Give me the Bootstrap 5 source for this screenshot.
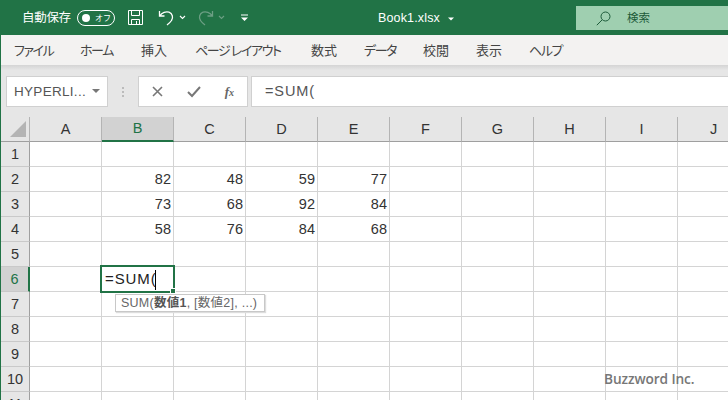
<!DOCTYPE html>
<html lang="ja">
<head>
<meta charset="utf-8">
<title>Book1.xlsx</title>
<link href="https://cdn.jsdelivr.net/npm/bootstrap@5.3.0/dist/css/bootstrap.min.css" rel="stylesheet">
<style>
html,body{width:728px;height:400px;overflow:hidden;background:#e6e6e6;}
body{font-family:"Liberation Sans","Noto Sans CJK JP",sans-serif;color:#333;}
.app{height:400px;overflow:hidden;border-left:1px solid #217346;position:relative;}
.titlebar{height:35px;background:#217346;color:#fff;margin-left:-1px;font-family:"Noto Sans CJK JP",sans-serif;}
.qat{width:576px;}
.autosave{font-size:12.5px;margin-left:22px;width:55px;white-space:nowrap;letter-spacing:-.3px;}
.toggle{width:38px;height:16px;border:1px solid #fff;border-radius:8px;padding-left:4px;font-size:8px;gap:5px;}
.toggle i{width:8px;height:8px;border-radius:50%;background:#fff;display:block;}
.save-ic{margin-left:12px;}
.undo-ic{margin-left:14px;}
.undo-ch{margin-left:3px;}
.redo-ic{margin-left:10px;}
.redo-ch{margin-left:4px;}
.qat-more{margin-left:15px;}
.fname{font-family:"Liberation Sans",sans-serif;font-size:12.5px;position:absolute;left:377px;top:9px;letter-spacing:.15px;}
.searchbox{width:152px;height:24px;background:#9fcfb0;align-self:flex-start;margin-top:6px;color:#1d5b3a;font-size:11.5px;padding-left:20px;gap:16px;}
.ribbon{height:30px;background:#f3f2f1;font-family:"Noto Sans CJK JP",sans-serif;font-size:13px;color:#444;font-feature-settings:"palt";}
.ribbon span{position:absolute;top:41px;line-height:17px;white-space:nowrap;}
.ribbon .kana{letter-spacing:-1.400px;}
.ribbonshadow{height:5px;background:linear-gradient(#d4d4d4,#e6e6e6);}
.fbar{height:37px;padding:6px 0 0 5px;}
.namebox{width:102px;height:31px;background:#fff;border:1px solid #d0d0d0;font-size:13.5px;color:#555;padding:2px 7px 0;letter-spacing:.3px;}
.caret-d{width:0;height:0;border-left:4px solid transparent;border-right:4px solid transparent;border-top:4px solid #777;margin-top:-4px;}
.grip{width:30px;gap:2px;}
.grip i{width:2px;height:2px;background:#bbb;display:block;}
.fxbtns{width:110px;height:31px;background:#fff;border:1px solid #d0d0d0;padding:0 13px 0 13px;}
.fxtext{height:31px;background:#fff;border:1px solid #d0d0d0;margin-left:3px;flex:1;margin-right:-1px;font-size:14.5px;color:#555;padding-left:13px;letter-spacing:.9px;}
.fx{font-family:"Liberation Serif",serif;font-style:italic;font-weight:bold;font-size:13px;color:#666;}
.fx em{font-size:10px;}
.headgap{height:10px;background:#e6e6e6;}
.grid{border-collapse:separate;border-spacing:0;table-layout:fixed;width:749px;margin:0;background:#fff;}
.grid th,.grid td{padding:0;box-sizing:border-box;}
.grid col.rh{width:29px;}
.grid col.cw{width:72px;}
.grid thead th{height:25px;background:#e6e6e6;font-weight:400;font-size:14.5px;text-align:center;color:#333;border-right:1px solid #b4b4b4;border-bottom:1px solid #9f9f9f;line-height:1;}
.grid thead th.on{background:#d2d2d2;color:#217346;border-bottom:2px solid #217346;}
.grid tbody th{height:25px;background:#e6e6e6;font-weight:400;font-size:14.5px;text-align:center;color:#333;border-right:1px solid #9f9f9f;border-bottom:1px solid #c9c9c9;line-height:1;}
.grid tbody th.on{background:#d2d2d2;color:#217346;border-right:2px solid #217346;}
.grid td{height:25px;border-right:1px solid #d4d4d4;border-bottom:1px solid #d4d4d4;background:#fff;text-align:right;font-size:14.5px;line-height:1;color:#333;padding-right:2px;}
.corner{position:relative;}
.corner svg{position:absolute;left:8px;top:3px;}
.selcell{position:absolute;left:99px;top:265px;width:75px;height:28px;border:2px solid #217346;font-size:15px;color:#222;padding-left:3px;line-height:23px;letter-spacing:.9px;white-space:nowrap;}
.selcell i{position:absolute;left:53px;top:3px;width:1px;height:20px;background:#000;}
.selcell u{position:absolute;right:-3px;bottom:-3px;width:6px;height:6px;background:#217346;border:1px solid #fff;}
.tip{position:absolute;left:114px;top:294px;width:150px;height:18px;background:#fff;border:1px solid #c8c8c8;box-shadow:1px 1px 1px #ddd;font-size:12.5px;color:#666;line-height:16px;padding-left:5px;white-space:nowrap;letter-spacing:.25px;}
.tip b{color:#555;}
.wm{position:absolute;left:603px;top:369px;font-size:13.7px;color:#777;font-family:"Open Sans",sans-serif;font-weight:600;letter-spacing:-.1px;}
</style>
</head>
<body>
<div class="app">
  <div class="titlebar d-flex align-items-center">
    <div class="qat d-flex align-items-center">
      <span class="autosave">自動保存</span>
      <span class="toggle d-flex align-items-center"><i></i><span>オフ</span></span>
      <svg class="save-ic" width="17" height="17" viewBox="0 0 17 17" fill="none" stroke="#fff" stroke-width="1"><path d="M1.5 1.5h14v14h-14zM4.500 1.500v5h8v-5M4.500 15.500v-5h8v5M9.500 12v3"/></svg>
      <svg class="undo-ic" width="18" height="18" viewBox="0 0 18 18" fill="none" stroke="#fff" stroke-width="1.300"><path d="M1.500 2v5h5M1.800 6.800C4 3.500 8 2.200 11 3.200c3.500 1.200 4.500 5.500 2.500 8.300-1 1.500-2.500 3-4.500 4.500"/></svg>
      <svg class="undo-ch" width="7" height="5" viewBox="0 0 7 5" fill="none" stroke="#fff" stroke-width="1.100"><path d="M1 1l2.500 2.500L6 1"/></svg>
      <svg class="redo-ic" width="18" height="18" viewBox="0 0 18 18" fill="none" stroke="#6c9f84" stroke-width="1.300"><path d="M16.500 2v5h-5M16.200 6.800C14 3.500 10 2.200 7 3.200c-3.500 1.200-4.500 5.500-2.500 8.300 1 1.500 2.500 3 4.500 4.500"/></svg>
      <svg class="redo-ch" width="7" height="5" viewBox="0 0 7 5" fill="none" stroke="#6c9f84" stroke-width="1.100"><path d="M1 1l2.500 2.500L6 1"/></svg>
      <svg class="qat-more" width="9" height="8" viewBox="0 0 9 8"><path d="M1 .5h7v1H1zM1 3.500h7L4.500 7z" fill="#fff"/></svg>
    </div>
    <span class="fname">Book1.xlsx<svg class="ms-2" width="6" height="4" viewBox="0 0 6 4"><path d="M0 .5h6L3 3.500z" fill="#fff"/></svg></span>
    <div class="searchbox flex-grow-1 d-flex align-items-center">
      <svg width="15" height="15" viewBox="0 0 15 15" fill="none" stroke="#1d5b3a" stroke-width="1"><circle cx="9.500" cy="5.500" r="4.500"/><path d="M6.200 8.800L.8 14.200"/></svg>
      <span>検索</span>
    </div>
  </div>
  <div class="ribbon">
    <span class="kana" style="left:13px">ファイル</span>
    <span class="kana" style="left:79px">ホーム</span>
    <span style="left:140px">挿入</span>
    <span class="kana" style="left:194px">ページ レイアウト</span>
    <span style="left:310px">数式</span>
    <span class="kana" style="left:363px">データ</span>
    <span style="left:422px">校閲</span>
    <span style="left:475px">表示</span>
    <span class="kana" style="left:528px">ヘルプ</span>
  </div>
  <div class="ribbonshadow"></div>
  <div class="fbar d-flex">
    <div class="namebox d-flex align-items-center justify-content-between"><span>HYPERLI...</span><i class="caret-d"></i></div>
    <div class="grip d-flex flex-column align-items-center justify-content-center"><i></i><i></i><i></i></div>
    <div class="fxbtns d-flex align-items-center justify-content-between">
      <svg width="11" height="11" viewBox="0 0 11 11" fill="none" stroke="#777" stroke-width="1.600"><path d="M1 1l9 9M10 1L1 10"/></svg>
      <svg width="14" height="12" viewBox="0 0 14 12" fill="none" stroke="#777" stroke-width="2"><path d="M1 6l4 4 8-9"/></svg>
      <span class="fx">f<em>x</em></span>
    </div>
    <div class="fxtext d-flex align-items-center">=SUM(</div>
  </div>
  <div class="headgap"></div>
  <table class="grid">
    <colgroup><col class="rh"><col class="cw"><col class="cw"><col class="cw"><col class="cw"><col class="cw"><col class="cw"><col class="cw"><col class="cw"><col class="cw"><col class="cw"></colgroup>
    <thead><tr><th class="corner"><svg width="18" height="18" viewBox="0 0 18 18"><path d="M17 1v16H1z" fill="#b4b4b4"/></svg></th><th>A</th><th class="on">B</th><th>C</th><th>D</th><th>E</th><th>F</th><th>G</th><th>H</th><th>I</th><th>J</th></tr></thead>
    <tbody>
      <tr><th>1</th><td></td><td></td><td></td><td></td><td></td><td></td><td></td><td></td><td></td><td></td></tr>
      <tr><th>2</th><td></td><td>82</td><td>48</td><td>59</td><td>77</td><td></td><td></td><td></td><td></td><td></td></tr>
      <tr><th>3</th><td></td><td>73</td><td>68</td><td>92</td><td>84</td><td></td><td></td><td></td><td></td><td></td></tr>
      <tr><th>4</th><td></td><td>58</td><td>76</td><td>84</td><td>68</td><td></td><td></td><td></td><td></td><td></td></tr>
      <tr><th>5</th><td></td><td></td><td></td><td></td><td></td><td></td><td></td><td></td><td></td><td></td></tr>
      <tr><th class="on">6</th><td></td><td></td><td></td><td></td><td></td><td></td><td></td><td></td><td></td><td></td></tr>
      <tr><th>7</th><td></td><td></td><td></td><td></td><td></td><td></td><td></td><td></td><td></td><td></td></tr>
      <tr><th>8</th><td></td><td></td><td></td><td></td><td></td><td></td><td></td><td></td><td></td><td></td></tr>
      <tr><th>9</th><td></td><td></td><td></td><td></td><td></td><td></td><td></td><td></td><td></td><td></td></tr>
      <tr><th>10</th><td></td><td></td><td></td><td></td><td></td><td></td><td></td><td></td><td></td><td></td></tr>
      <tr><th>11</th><td></td><td></td><td></td><td></td><td></td><td></td><td></td><td></td><td></td><td></td></tr>
    </tbody>
  </table>
  <div class="selcell">=SUM(<i></i><u></u></div>
  <div class="tip">SUM(<b class="fw-bold">数値1</b>, [数値2], ...)</div>
  <div class="wm">Buzzword Inc.</div>
</div>
<script src="https://cdn.jsdelivr.net/npm/bootstrap@5.3.0/dist/js/bootstrap.bundle.min.js"></script>
</body>
</html>
